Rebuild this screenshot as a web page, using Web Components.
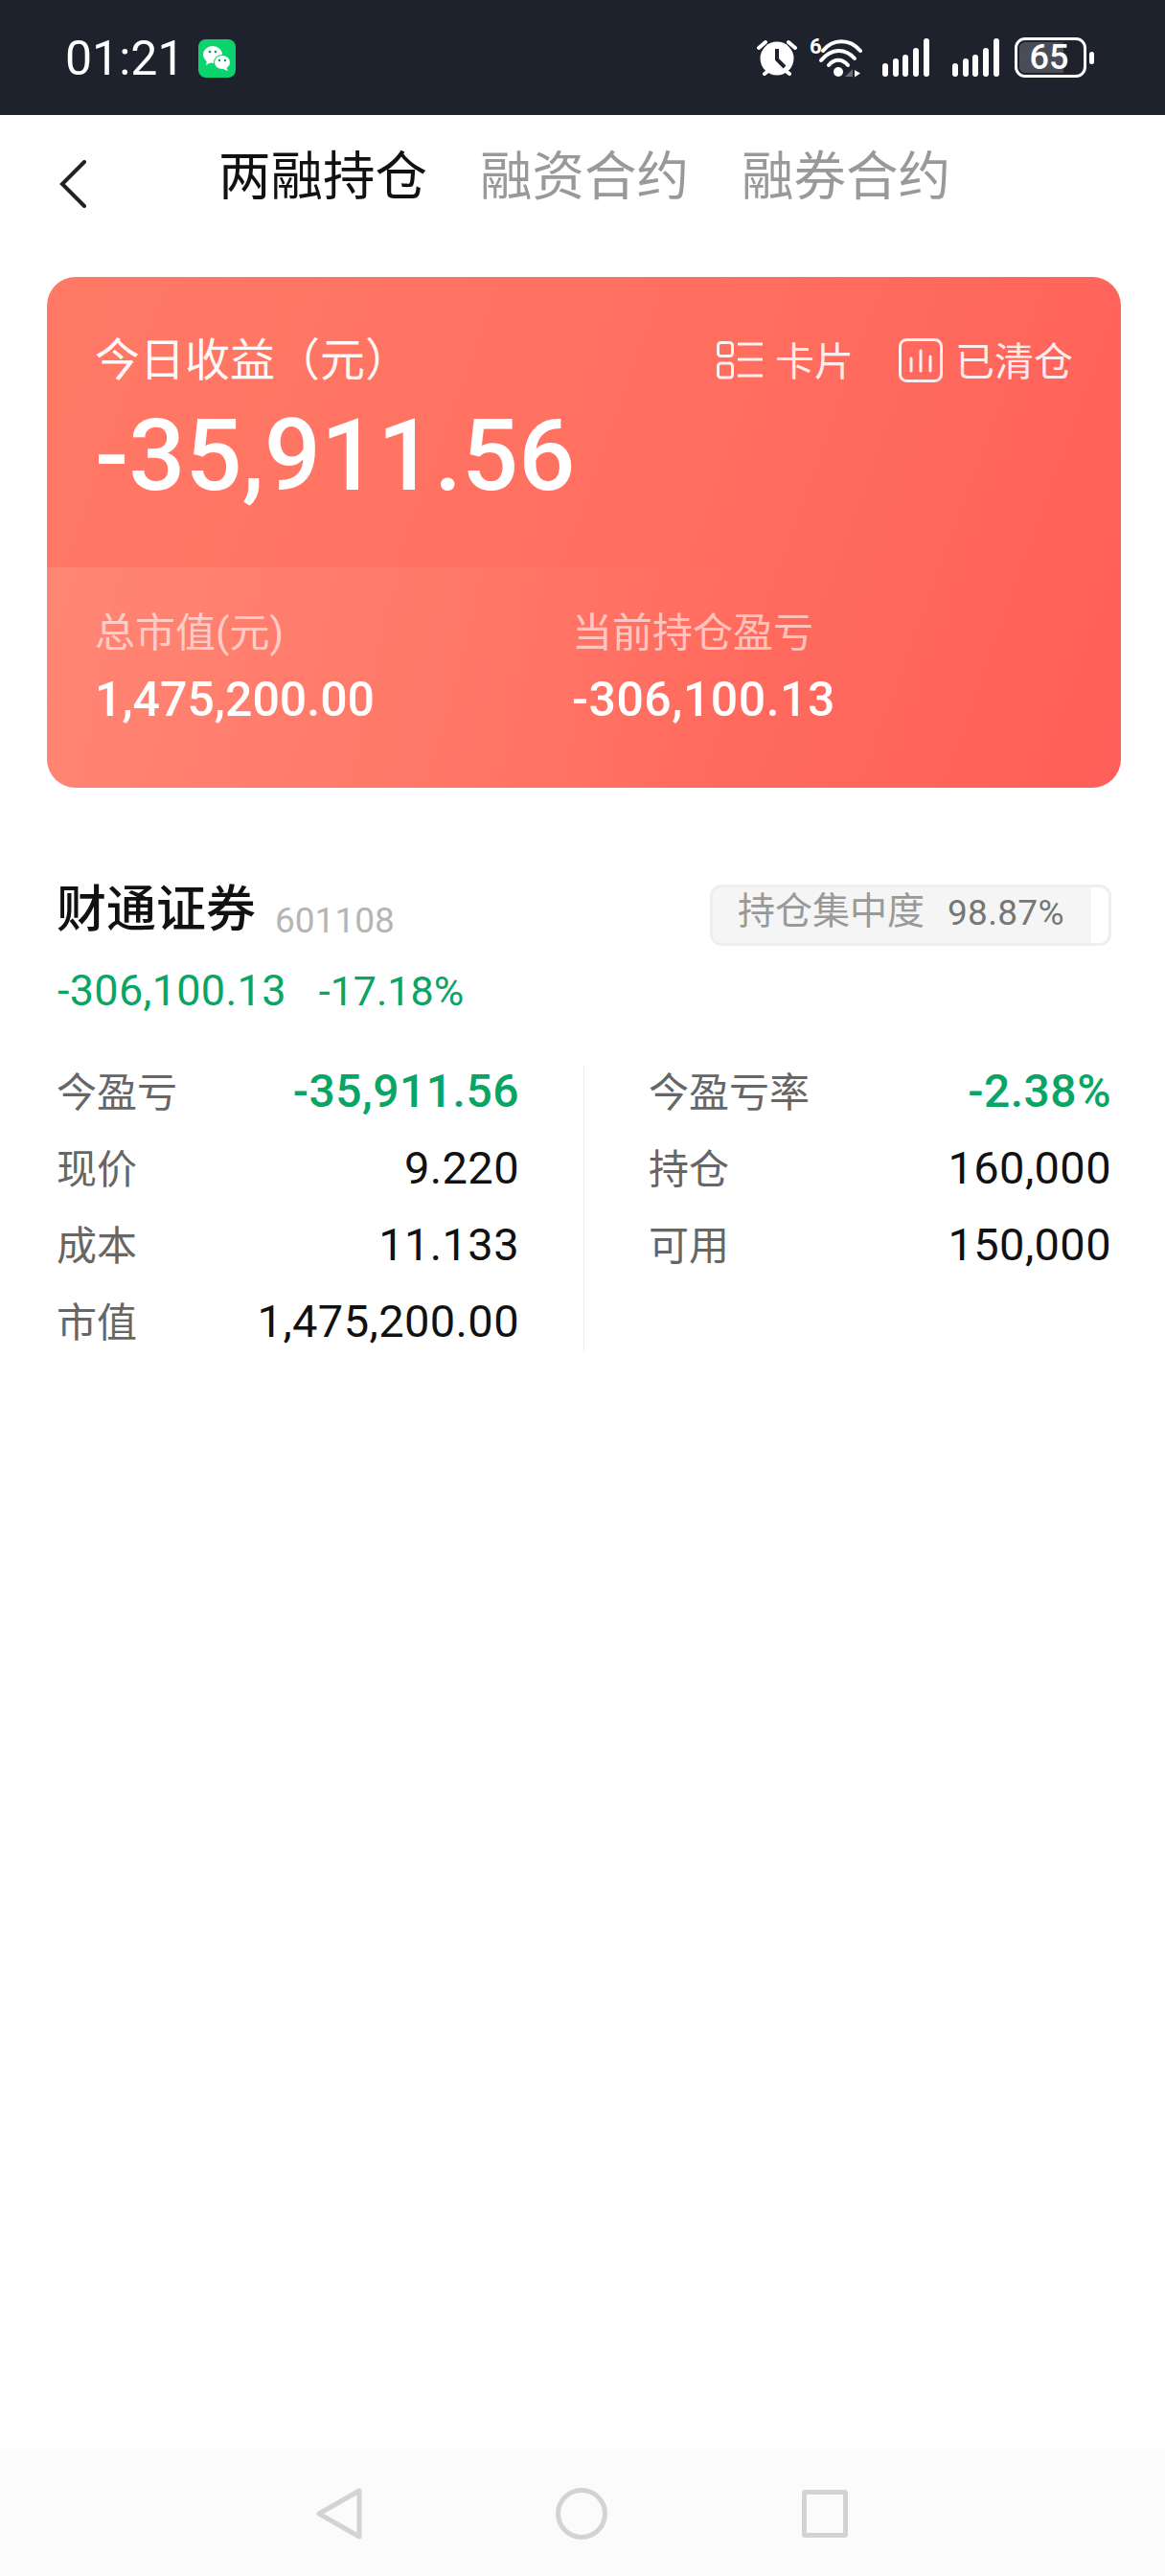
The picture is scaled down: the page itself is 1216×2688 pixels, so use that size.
<!DOCTYPE html>
<html lang="zh">
<head>
<meta charset="utf-8">
<title>两融持仓</title>
<style>
    html, body { margin: 0; padding: 0; background: #fff; }
    body {
        width: 1216px;
        height: 2688px;
        display: flex;
        flex-direction: column;
        overflow: hidden;
        font-family: Roboto, "Noto Sans CJK SC", sans-serif;
    }
    main { flex: 1; display: block; }
</style>
</head>
<body>
<status-bar></status-bar>
<tab-nav>
    <span slot="active">两融持仓</span>
    <span>融资合约</span>
    <span>融券合约</span>
</tab-nav>
<main>
    <profit-card></profit-card>
    <position-card></position-card>
</main>
<nav-bar></nav-bar>

<script>
const statusTemplate = `
<style>
    :host {
        display: flex;
        align-items: center;
        height: 120px;
        padding: 0 74px 0 68px;
        box-sizing: border-box;
        background: #1e222d;
        color: #fff;
    }
    .time { font-size: 50px; line-height: 120px; padding-top: 2px; width: 139px; }
    .spacer { flex: 1; }
    svg { display: block; }
    .wechat { margin-top: 2px; }
    .wifi { position: relative; margin-left: 13px; width: 55px; height: 42px; }
    .wifi b {
        position: absolute; left: 0; top: -1px;
        font-size: 22px; line-height: 22px; font-weight: 700;
    }
    .wifi svg { position: absolute; left: 0; top: 0; }
    .signal.first { margin-left: 21px; }
    .signal.second { margin-left: 24px; }
    .battery {
        position: relative; margin-left: 16px;
        width: 75px; height: 42px; box-sizing: border-box;
        border: 3px solid #fff; border-radius: 11px;
        overflow: hidden;
        display: flex; align-items: center; justify-content: center;
    }
    .battery i { position: absolute; left: 2px; top: 2px; bottom: 2px; width: 46px; background: #4a4d57; border-radius: 6px 0 0 6px; }
    .battery span { position: relative; font-size: 36px; line-height: 36px; font-weight: 500; margin-left: -3px; }
    .nub { width: 5px; height: 13px; margin-left: 3px; background: #fff; border-radius: 3px; }
</style>
<span class="time">01:21</span>
<svg class="wechat" width="39" height="40" viewBox="0 0 39 40">
    <rect width="39" height="40" rx="8" fill="#0bd46f"/>
    <ellipse cx="15" cy="16" rx="10" ry="9" fill="#fff"/>
    <path d="M9 22l-1 5 5-3z" fill="#fff"/>
    <ellipse cx="25" cy="24" rx="9" ry="8" fill="#0bd46f"/>
    <ellipse cx="25" cy="24" rx="8" ry="7" fill="#fff"/>
    <path d="M29 29l2 4-5-2z" fill="#fff"/>
    <circle cx="12" cy="13" r="1.3" fill="#0a9b55"/>
    <circle cx="18" cy="13" r="1.3" fill="#0a9b55"/>
    <circle cx="22" cy="22" r="1.2" fill="#0a9b55"/>
    <circle cx="28" cy="22" r="1.2" fill="#0a9b55"/>
</svg>
<span class="spacer"></span>
<svg width="42" height="40" viewBox="0 0 42 40">
    <circle cx="21" cy="21" r="17.5" fill="#fff"/>
    <path d="M21 11v11l8 8" fill="none" stroke="#1e222d" stroke-width="4"/>
    <path d="M2 10l7-6M33 4l7 6M8 37l4-3M34 37l-4-3" stroke="#fff" stroke-width="4" stroke-linecap="round"/>
</svg>
<span class="wifi">
    <b>6</b>
    <svg width="55" height="42" viewBox="0 0 55 42">
        <path d="M14 14C24 1 42 1 53 14" fill="none" stroke="#fff" stroke-width="4" stroke-linecap="round"/>
        <path d="M12 24C23 11 37 11 47 22" fill="none" stroke="#fff" stroke-width="4" stroke-linecap="round"/>
        <path d="M20 29C26 22 34 22 40 29" fill="none" stroke="#fff" stroke-width="4" stroke-linecap="round"/>
        <circle cx="30" cy="36" r="5" fill="#fff"/>
        <path d="M37 41l8-8v8z" fill="#6a6d76"/>
        <path d="M47 34l6 3.500-6 4z" fill="#fff"/>
    </svg>
</span>
<svg class="signal first" width="49" height="40" viewBox="0 0 49 40">
    <g fill="#fff">
        <rect x="0" y="26" width="6" height="14" rx="3"/>
        <rect x="11" y="21" width="6" height="19" rx="3"/>
        <rect x="21" y="17" width="6" height="23" rx="3"/>
        <rect x="32" y="10" width="6" height="30" rx="3"/>
        <rect x="43" y="0" width="6" height="40" rx="3"/>
    </g>
</svg>
<svg class="signal second" width="49" height="40" viewBox="0 0 49 40">
    <g fill="#fff">
        <rect x="0" y="26" width="6" height="14" rx="3"/>
        <rect x="11" y="21" width="6" height="19" rx="3"/>
        <rect x="21" y="17" width="6" height="23" rx="3"/>
        <rect x="32" y="10" width="6" height="30" rx="3"/>
        <rect x="43" y="0" width="6" height="40" rx="3"/>
    </g>
</svg>
<div class="battery"><i></i><span>65</span></div>
<div class="nub"></div>
`;

class StatusBar extends HTMLElement {
    constructor() {
        super();
        this.attachShadow({ mode: 'open' });
        this.shadowRoot.innerHTML = statusTemplate;
    }
}

const tabTemplate = `
<style>
    :host {
        display: flex;
        align-items: center;
        height: 124px;
        padding-left: 62px;
        font-size: 54.500px;
        color: #999;
    }
    svg { display: block; margin: 20px 138px 0 0; }
    .tabs { display: flex; gap: 55px; line-height: 70px; padding-top: 3px; }
    .on { color: #111; }
    ::slotted(span) { display: block; }
</style>
<svg width="28" height="50" viewBox="0 0 28 50">
    <path d="M26 2L3 25l23 23" fill="none" stroke="#222" stroke-width="4" stroke-linecap="round"/>
</svg>
<div class="tabs">
    <div class="on"><slot name="active"></slot></div>
    <slot></slot>
</div>
`;

class TabNav extends HTMLElement {
    constructor() {
        super();
        this.attachShadow({ mode: 'open' });
        this.shadowRoot.innerHTML = tabTemplate;
    }
}

const cardTemplate = `
<style>
    :host {
        display: block;
        margin: 45px 46px 0 49px;
        height: 533px;
        border-radius: 30px;
        overflow: hidden;
        color: #fff;
        background: linear-gradient(110deg, #ff7a66 0%, #ff6f60 55%, #ff5f58 100%);
    }
    .top { height: 303px; box-sizing: border-box; padding: 57px 50px 0 50px; }
    .head { display: flex; align-items: center; height: 60px; }
    .title { font-size: 47px; line-height: 60px; flex: 1; opacity: .95; }
    .act { display: flex; align-items: center; font-size: 41px; line-height: 50px; color: rgba(255,255,255,.9); padding-top: 4px; }
    .act svg { display: block; margin: -4px 13px 0 0; }
    .act + .act { margin-left: 47px; }
    .total { font-size: 104px; line-height: 110px; font-weight: 500; margin-top: 15px; }
    .bottom {
        height: 230px; box-sizing: border-box; padding: 44px 0 0 50px;
        display: flex;
        background: linear-gradient(100deg, rgba(255,255,255,.1), rgba(255,255,255,0) 65%);
    }
    .cell { width: 498px; }
    .label { font-size: 42px; line-height: 50px; color: rgba(255,255,255,.62); }
    .value { font-size: 50px; line-height: 56px; margin-top: 16px; font-weight: 500; }
    .neg { letter-spacing: .5px; }
</style>
<div class="top">
    <div class="head">
        <span class="title">今日收益（元）</span>
        <span class="act">
            <svg width="48" height="40" viewBox="0 0 48 40" fill="none" stroke="#fff" stroke-opacity=".9" stroke-width="3">
                <rect x="1.500" y="1.500" width="15" height="14" rx="3"/>
                <rect x="1.500" y="23" width="15" height="15" rx="3"/>
                <path d="M22 3h26M22 19h26M22 36h26"/>
            </svg>卡片
        </span>
        <span class="act">
            <svg width="46" height="46" viewBox="0 0 46 46" fill="none" stroke="#fff" stroke-opacity=".9" stroke-width="3">
                <rect x="1.500" y="1.500" width="43" height="43" rx="7"/>
                <path d="M13 21v13M23 13v21M33 19v15" stroke-linecap="round"/>
            </svg>已清仓
        </span>
    </div>
    <div class="total">-35,911.56</div>
</div>
<div class="bottom">
    <div class="cell">
        <div class="label">总市值(元)</div>
        <div class="value">1,475,200.00</div>
    </div>
    <div class="cell">
        <div class="label">当前持仓盈亏</div>
        <div class="value neg">-306,100.13</div>
    </div>
</div>
`;

class ProfitCard extends HTMLElement {
    constructor() {
        super();
        this.attachShadow({ mode: 'open' });
        this.shadowRoot.innerHTML = cardTemplate;
    }
}

const statTemplate = `
<style>
    :host {
        display: flex;
        justify-content: space-between;
        align-items: center;
        height: 80px;
        font-size: 42px;
        color: #666;
    }
    .label { position: relative; top: -2px; }
    .val { font-size: 47px; color: #111; letter-spacing: .4px; }
    :host([green]) .val { color: #0aa565; font-size: 48px; font-weight: 500; letter-spacing: .5px; }
</style>
<span class="label"><slot></slot></span>
<span class="val"></span>
`;

class StatRow extends HTMLElement {
    constructor() {
        super();
        this.attachShadow({ mode: 'open' });
        this.shadowRoot.innerHTML = statTemplate;
    }
    connectedCallback() {
        this.shadowRoot.querySelector('.val').textContent = this.getAttribute('value');
    }
}

const positionTemplate = `
<style>
    :host {
        display: block;
        margin-top: 101px;
        padding: 0 56px 0 59px;
    }
    .head { display: flex; align-items: flex-start; height: 64px; }
    .name { font-size: 52px; line-height: 64px; font-weight: 500; color: #111; margin-top: -5px; }
    .code { font-size: 37px; line-height: 64px; color: #b5b5b5; margin: 6px 0 0 20px; flex: 1; }
    .badge {
        width: 419px; height: 64px; box-sizing: border-box;
        border: 3px solid #efefef; border-radius: 12px;
        overflow: hidden;
        display: flex;
        align-items: center;
        padding-left: 26px;
        background: linear-gradient(90deg, #f5f5f5 95.7%, #fff 95.7%);
    }
    .badge span { font-size: 39px; line-height: 50px; color: #999; margin: -9px 24px 0 0; }
    .badge b { font-size: 37px; line-height: 50px; font-weight: 400; color: #777; margin-top: -4px; letter-spacing: .3px; }
    .pnl { display: flex; gap: 34px; margin-top: 20px; padding-left: 1px; line-height: 54px; color: #0aa565; font-size: 45px; }
    .pnl span:first-child { letter-spacing: .3px; }
    .pnl span + span { font-size: 43px; }
    .stats { display: grid; grid-template-columns: 483px 135px 483px; margin-top: 37px; }
    .line { background: #efefef; width: 1px; height: 300px; margin: 13px 0 0 67px; }
</style>
<div class="head">
    <span class="name">财通证券</span>
    <span class="code">601108</span>
    <div class="badge"><span>持仓集中度</span><b>98.87%</b></div>
</div>
<div class="pnl"><span>-306,100.13</span><span>-17.18%</span></div>
<div class="stats">
    <div>
        <stat-row value="-35,911.56" green>今盈亏</stat-row>
        <stat-row value="9.220">现价</stat-row>
        <stat-row value="11.133">成本</stat-row>
        <stat-row value="1,475,200.00">市值</stat-row>
    </div>
    <div class="line"></div>
    <div>
        <stat-row value="-2.38%" green>今盈亏率</stat-row>
        <stat-row value="160,000">持仓</stat-row>
        <stat-row value="150,000">可用</stat-row>
    </div>
</div>
`;

class PositionCard extends HTMLElement {
    constructor() {
        super();
        this.attachShadow({ mode: 'open' });
        this.shadowRoot.innerHTML = positionTemplate;
    }
}

const navTemplate = `
<style>
    :host {
        display: flex;
        height: 131px;
        background: #fbfbfb;
        padding: 39px 0 0 330px;
        box-sizing: border-box;
    }
    svg { display: block; }
    .home { margin-left: 202px; }
    .recent { margin-left: 203px; margin-top: 2px; }
</style>
<svg width="48" height="54" viewBox="0 0 48 54" fill="none" stroke="#d3d3d3" stroke-width="5" stroke-linejoin="round">
    <path d="M45 3L3 27l42 24z"/>
</svg>
<svg class="home" width="54" height="54" viewBox="0 0 54 54" fill="none" stroke="#d3d3d3" stroke-width="5">
    <circle cx="27" cy="27" r="24.500"/>
</svg>
<svg class="recent" width="48" height="50" viewBox="0 0 48 50" fill="none" stroke="#d3d3d3" stroke-width="5" stroke-linejoin="round">
    <rect x="2.500" y="2.500" width="43" height="45" rx="1"/>
</svg>
`;

class NavBar extends HTMLElement {
    constructor() {
        super();
        this.attachShadow({ mode: 'open' });
        this.shadowRoot.innerHTML = navTemplate;
    }
}

customElements.define('status-bar', StatusBar);
customElements.define('tab-nav', TabNav);
customElements.define('profit-card', ProfitCard);
customElements.define('stat-row', StatRow);
customElements.define('position-card', PositionCard);
customElements.define('nav-bar', NavBar);
</script>
</body>
</html>
